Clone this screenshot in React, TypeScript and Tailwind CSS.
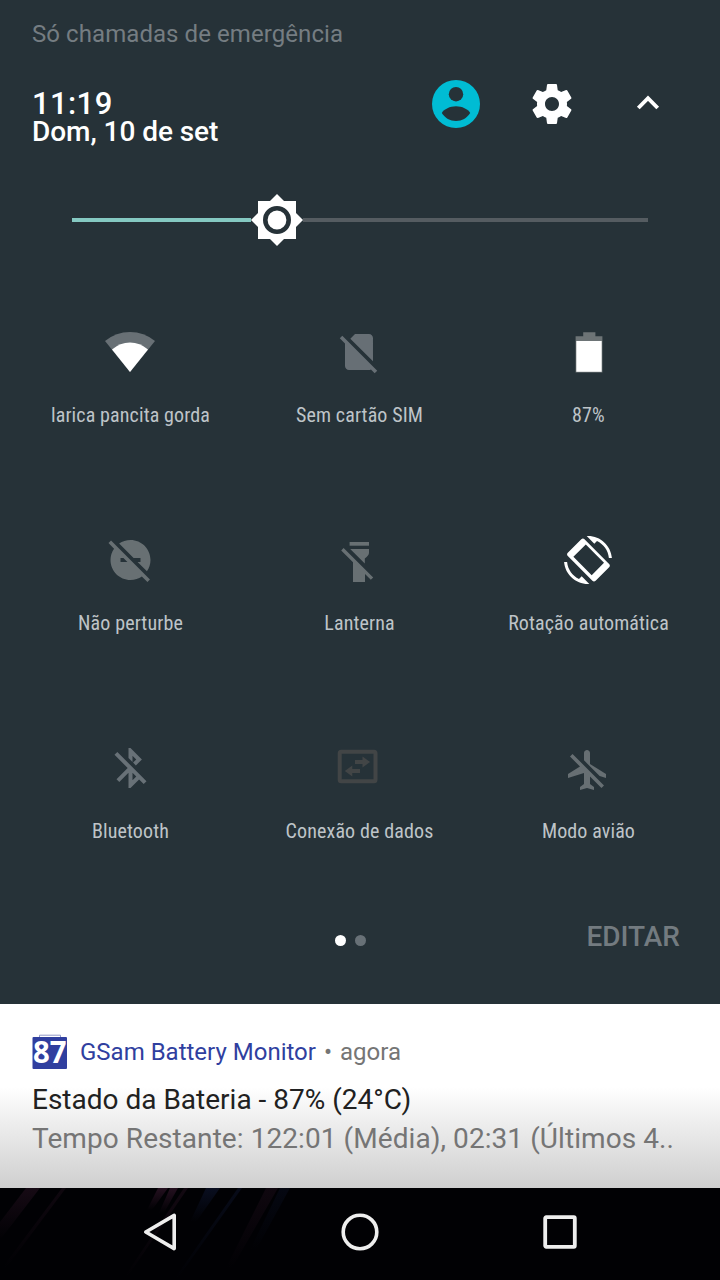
import type { ReactNode } from 'react';

type IconProps = {
  className?: string;
  children: ReactNode;
};

const Icon = ({ className = '', children }: IconProps) => (
  <svg
    viewBox="0 0 24 24"
    className={`block size-12 ${className}`}
    fill="currentColor"
  >
    {children}
  </svg>
);

const WifiIcon = () => (
  <svg viewBox="0 0 50 48" className="block h-12 w-[50px]" fill="currentColor">
    <path className="text-[#687075]" d="M0 13Q11 4 25 4T50 13L25 44z" />
    <path className="text-white" d="M7 21.6Q15 14.6 25 14.6T43 21.6L25 44z" />
  </svg>
);

const NoSimIcon = () => (
  <Icon className="text-[#676f75]">
    <path d="M18.99 5c0-1.1-.89-2-1.99-2h-7L7.66 5.34 19 16.68 18.99 5zM3.65 3.88L2.38 5.15 5 7.77V19c0 1.1.9 2 2 2h10.01c.35 0 .67-.1.96-.26l1.88 1.88 1.27-1.27L3.65 3.88z" />
  </Icon>
);

const BatteryIcon = () => (
  <svg
    viewBox="0 0 48 48"
    className="block size-12 translate-x-px"
    fill="currentColor"
  >
    <path
      className="text-[#6d7476]"
      d="M18.2 4.3H30.4V8.3H37.4V44.6H10.6V8.3H18.2z"
    />
    <path className="text-white" d="M11.3 13H36.7V43.8H11.3z" />
  </svg>
);

const DoNotDisturbIcon = () => (
  <Icon className="translate-x-[0.5px] text-[#687073]">
    <path d="M17 11v2h-1.46l4.68 4.68C21.34 16.07 22 14.11 22 12c0-5.52-4.48-10-10-10-2.11 0-4.07.66-5.68 1.78L13.54 11H17zM2.27 2.27L1 3.54l2.78 2.78C2.66 7.93 2 9.89 2 12c0 5.52 4.48 10 10 10 2.11 0 4.07-.66 5.68-1.78L20.46 23l1.27-1.27L11 11 2.27 2.27zM7 13v-2h1.46l2 2H7z" />
  </Icon>
);

const FlashlightIcon = () => (
  <svg
    viewBox="0 0 48 48"
    className="block size-12 text-[#687073]"
    fill="currentColor"
  >
    <path d="M14.6 6H34V9.7H14.6z" />
    <path d="M15.2 13H34V16.8Q34 19.6 29.8 22.6V27.6z" />
    <path d="M8.6 12.1L6.2 14.5L18 26.3V46H30V38L35.8 43.8L38.2 41.4z" />
  </svg>
);

const RotationIcon = () => (
  <svg
    viewBox="0 0 48 48"
    className="block size-12 text-white"
    fill="currentColor"
    fillRule="evenodd"
  >
    <path d="M33 5.04c6.5 3.1 11.2 9.44 11.9 16.96h3C46.9 9.7 36.6 0 24 0l-1.3.06 7.6 7.6z" />
    <path d="M15 42.96C8.5 39.9 3.8 33.5 3.1 26H.1C1.1 38.3 11.4 48 24 48l1.3-.06-7.6-7.6z" />
    <path d="M20.5 3.3c-1-1-2.2-1-3.2 0L3.8 16.8c-1 1-1 2.2 0 3.2l24.6 24.7c1 1 2.2 1 3.2 0L45.1 31.2c1-1 1-2.2 0-3.2zM9.4 20.7L21.8 8.4L40 26.7L27.7 39.2z" />
  </svg>
);

const BluetoothIcon = () => (
  <Icon className="translate-x-[0.5px] text-[#687177]">
    <path d="M13 5.83l1.88 1.88-1.6 1.6 1.41 1.41 3.02-3.02L12 2h-1v5.03l2 2v-3.2zM5.41 4L4 5.41 10.59 12 5 17.59 6.41 19 11 14.41V22h1l4.29-4.29 2.3 2.29L20 18.59 5.41 4zM13 18.17v-3.76l1.88 1.88L13 18.17z" />
  </Icon>
);

const DataIcon = () => (
  <svg
    viewBox="0 0 48 48"
    className="block size-12 translate-x-[0.5px] text-[#424546]"
    fill="currentColor"
  >
    <rect
      x="4.2"
      y="7.7"
      width="35.8"
      height="29.6"
      rx="1.5"
      fill="none"
      stroke="currentColor"
      strokeWidth="4"
    />
    <path d="M19.5 16H27V12.5L34.6 18L27 23.4V20H19.5z" />
    <path d="M24.5 25H16.8V21.6L9.3 27.1L16.8 32.5V29H24.5z" />
  </svg>
);

const AirplaneIcon = () => (
  <Icon className="translate-y-0.5 text-[#676f73]">
    <path d="M13 9V3.5c0-.83-.67-1.5-1.5-1.5S10 2.67 10 3.5v3.68l7.83 7.83L21 16v-2l-8-5zM3 5.27l4.99 4.99L2 14v2l8-2.5V19l-2 1.5V22l3.5-1 3.5 1v-1.5L13 19v-3.73L18.73 21 20 19.73 4.27 4 3 5.27z" />
  </Icon>
);

const tiles = [
  { label: 'larica pancita gorda', icon: <WifiIcon /> },
  { label: 'Sem cartão SIM', icon: <NoSimIcon /> },
  { label: '87%', icon: <BatteryIcon /> },
  { label: 'Não perturbe', icon: <DoNotDisturbIcon /> },
  { label: 'Lanterna', icon: <FlashlightIcon /> },
  { label: 'Rotação automática', icon: <RotationIcon /> },
  { label: 'Bluetooth', icon: <BluetoothIcon /> },
  { label: 'Conexão de dados', icon: <DataIcon /> },
  { label: 'Modo avião', icon: <AirplaneIcon /> },
];

const Header = () => (
  <header className="flex h-[104px] justify-between pr-12 pl-8">
    <div className="pt-[29px] font-medium whitespace-nowrap text-white">
      <div className="text-[31px] leading-[30px] tracking-[0.4px]">11:19</div>
      <div className="text-[28px] leading-[26px] tracking-[-0.05px]">
        Dom, 10 de set
      </div>
    </div>
    <div className="flex gap-12 pt-5">
      <svg viewBox="0 0 48 48" className="block size-12">
        <circle cx="24" cy="24" r="24" fill="#00bcd4" />
        <circle cx="24" cy="14.2" r="7.2" fill="#263238" />
        <path
          d="M9.8 33C12 29 18 26.2 24 26.2S36 29 38.2 33C35 38 30 41 24 41S13 38 9.8 33z"
          fill="#263238"
        />
      </svg>
      <Icon className="text-white">
        <path d="M19.43 12.98c.04-.32.07-.64.07-.98s-.03-.66-.07-.98l2.11-1.65c.19-.15.24-.42.12-.64l-2-3.46c-.12-.22-.39-.3-.61-.22l-2.49 1c-.52-.4-1.08-.73-1.69-.98l-.38-2.65C14.46 2.18 14.25 2 14 2h-4c-.25 0-.46.18-.49.42l-.38 2.65c-.61.25-1.17.59-1.69.98l-2.49-1c-.23-.09-.49 0-.61.22l-2 3.46c-.13.22-.07.49.12.64l2.11 1.65c-.04.32-.07.65-.07.98s.03.66.07.98l-2.11 1.65c-.19.15-.24.42-.12.64l2 3.46c.12.22.39.3.61.22l2.49-1c.52.4 1.08.73 1.69.98l.38 2.65c.03.24.24.42.49.42h4c.25 0 .46-.18.49-.42l.38-2.65c.61-.25 1.17-.59 1.69-.98l2.49 1c.23.09.49 0 .61-.22l2-3.46c.12-.22.07-.49-.12-.64l-2.11-1.65zM12 15.5c-1.93 0-3.5-1.57-3.5-3.5s1.57-3.5 3.5-3.5 3.5 1.57 3.5 3.5-1.57 3.5-3.5 3.5z" />
      </Icon>
      <svg
        viewBox="0 0 48 48"
        className="block size-12 text-white"
        fill="none"
        stroke="currentColor"
        strokeWidth="3.9"
      >
        <path d="M14.3 28L24 18.2L33.7 28" />
      </svg>
    </div>
  </header>
);

const BrightnessSlider = () => (
  <div className="flex h-[72px] items-center px-[72px]">
    <div className="h-1 w-[179px] bg-[#85c9c2]" />
    <svg viewBox="-26 -26 52 52" className="block size-[52px] shrink-0">
      <rect x="-19" y="-19" width="38" height="38" fill="#fff" />
      <path d="M-26 0L0-26L26 0L0 26z" fill="#fff" />
      <circle r="11.7" fill="none" stroke="#263238" strokeWidth="4.6" />
    </svg>
    <div className="h-1 flex-1 bg-[#555c61]" />
  </div>
);

const Notification = () => (
  <section className="h-[184px] bg-linear-to-b from-white from-[45%] to-[#cfcfcf] px-8 pt-7 whitespace-nowrap">
    <div className="flex h-10 items-center text-2xl text-[#757575]">
      <svg viewBox="0 0 36 36" className="mr-3 block size-9 overflow-visible">
        <path d="M7.5 4V1.2H28.5V4" fill="none" stroke="#9299c8" />
        <rect x="0.5" y="3" width="34.5" height="32" rx="1" fill="#303f9f" />
        <text
          x="1"
          y="29"
          textLength="33.5"
          lengthAdjust="spacingAndGlyphs"
          className="font-['Open_Sans',sans-serif] text-[30px] font-bold"
          fill="#fff"
        >
          87
        </text>
      </svg>
      <span className="text-[#303f9f]">GSam Battery Monitor</span>
      <span className="mx-2">•</span>
      <span>agora</span>
    </div>
    <div className="mt-2 text-[28px] leading-[39px]">
      <div className="text-[#212121]">Estado da Bateria - 87% (24°C)</div>
      <div className="tracking-[0.07px] text-[#757575]">
        Tempo Restante: 122:01 (Média), 02:31 (Últimos 4..
      </div>
    </div>
  </section>
);

const NavigationBar = () => (
  <nav className="relative h-[92px] bg-[#010104]">
    {/* wallpaper light trails */}
    <svg viewBox="0 0 720 92" className="absolute inset-0 h-full w-full">
      <defs>
        <linearGradient id="trail" x1="0" y1="0" x2="0" y2="1">
          <stop offset="0" stopColor="#24101f" />
          <stop offset="1" stopColor="#24101f" stopOpacity="0" />
        </linearGradient>
        <linearGradient id="trailBlue" x1="0" y1="0" x2="0" y2="1">
          <stop offset="0" stopColor="#0b1126" />
          <stop offset="1" stopColor="#0b1126" stopOpacity="0" />
        </linearGradient>
      </defs>
      <g fill="url(#trail)">
        <path d="M26 0H40L0 52V34z" opacity="0.6" />
        <path d="M62 0H66L6 80H2z" opacity="0.4" />
        <path d="M158 0H168L152 22H147z" />
        <path d="M170 0H178L164 25H159z" />
        <path d="M184 0H188L128 88H125z" opacity="0.5" />
        <path d="M266 0H278L232 80H226z" opacity="0.4" />
      </g>
      <g fill="url(#trailBlue)">
        <path d="M206 0H220L196 34H190z" opacity="0.8" />
        <path d="M238 0H242L178 90H175z" opacity="0.6" />
        <path d="M280 0H290L256 62H250z" opacity="0.4" />
      </g>
    </svg>
    <div className="relative flex h-[88px] items-center justify-center gap-[152px]">
      <svg
        viewBox="0 0 48 48"
        className="block size-12"
        fill="none"
        stroke="#eee"
        strokeWidth="3.6"
        strokeLinejoin="round"
      >
        <path d="M9.8 24L38.2 7.4V40.6z" />
      </svg>
      <svg
        viewBox="0 0 48 48"
        className="block size-12"
        fill="none"
        stroke="#eee"
        strokeWidth="3.6"
      >
        <circle cx="24" cy="24" r="16.8" />
      </svg>
      <svg
        viewBox="0 0 48 48"
        className="block size-12"
        fill="none"
        stroke="#eee"
        strokeWidth="3.8"
      >
        <rect x="9.2" y="9.2" width="29.6" height="29.6" rx="1" />
      </svg>
    </div>
  </nav>
);

const App = () => {
  return (
    <div className="h-[1280px] w-[720px] overflow-hidden bg-[#263238] font-[Roboto,sans-serif]">
      <div className="h-[60px] pt-[18px] pl-8 text-2xl leading-8 tracking-[0.07px] text-[#757d82]">
        Só chamadas de emergência
      </div>
      <Header />
      <div className="pt-5">
        <BrightnessSlider />
      </div>
      <main className="ml-4 grid h-[656px] w-[687px] auto-rows-[208px] grid-cols-3 pt-[72px]">
        {tiles.map(({ label, icon }) => (
          <div key={label} className="flex flex-col items-center">
            <div className="mr-px">{icon}</div>
            <div className="mt-[25px] font-['Roboto_Condensed',Roboto,sans-serif] text-xl leading-[28px] tracking-[0.12px] whitespace-nowrap text-[#bec4c8] font-stretch-condensed">
              {label}
            </div>
          </div>
        ))}
      </main>
      <div className="mb-9 grid h-14 grid-cols-3 items-center">
        <div className="col-start-2 flex justify-center gap-[9px] pr-[19px]">
          <span className="size-[11px] rounded-full bg-white" />
          <span className="size-[11px] rounded-full bg-[#687177]" />
        </div>
        <button className="pr-10 pb-1.5 text-right text-[28px] leading-none font-medium text-[#737b80]">
          EDITAR
        </button>
      </div>
      <Notification />
      <NavigationBar />
    </div>
  );
};

export default App;
